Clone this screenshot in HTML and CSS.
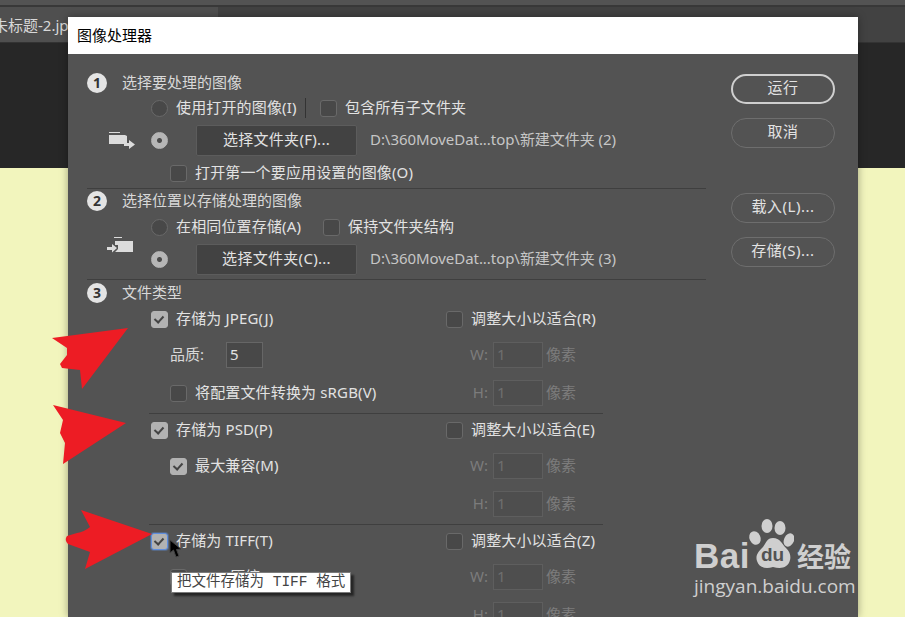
FILE: index.html
```html
<!DOCTYPE html>
<html lang="zh">
<head>
<meta charset="utf-8">
<title>图像处理器</title>
<link rel="stylesheet" href="styles.css">
</head>
<body>
<div class="app">
  <div class="menubar"></div>
  <div class="tabbar"><div class="tab"><span class="tab-text">未标题-2.jpg</span></div></div>
  <div class="canvas-dark"></div>
  <div class="canvas-doc"></div>
</div>

<div class="dialog">
  <div class="titlebar">图像处理器</div>
  <div class="dialog-body">
    <div class="main">
      <section class="section s1">
        <div class="step"><span class="badge">1</span><span class="step-text">选择要处理的图像</span></div>
        <div class="row"><span class="radio"></span><span class="lbl w-open">使用打开的图像(I)</span><span class="sep"></span><span class="box"></span><span class="lbl">包含所有子文件夹</span></div>
        <div class="row row-btn">
          <svg class="folder" width="26" height="18" viewBox="0 0 26 18"><path d="M0 0h11v1H0zM0 3h16l2 1v8H0z" fill="#dcdcdc"/><path d="M15 11h5V8l6 4.500-6 4.500v-3h-5z" fill="#dcdcdc"/></svg>
          <span class="radio on"></span><span class="pick">选择文件夹(F)...</span><span class="path">D:\360MoveDat...top\新建文件夹 (2)</span>
        </div>
        <div class="row row-sub"><span class="box"></span><span class="lbl">打开第一个要应用设置的图像(O)</span></div>
      </section>
      <section class="section s2">
        <div class="step"><span class="badge">2</span><span class="step-text">选择位置以存储处理的图像</span></div>
        <div class="row"><span class="radio"></span><span class="lbl w-same">在相同位置存储(A)</span><span class="box"></span><span class="lbl">保持文件夹结构</span></div>
        <div class="row row-btn">
          <svg class="folder folder-out" width="26" height="19" viewBox="0 0 26 19"><path d="M7 0h8v1H7zM8 4h18v11H8l3-3V8H8z" fill="#dcdcdc"/><path d="M0 10h5V7l5 4-5 4.500V13H0z" fill="#dcdcdc"/></svg>
          <span class="radio on"></span><span class="pick">选择文件夹(C)...</span><span class="path">D:\360MoveDat...top\新建文件夹 (3)</span>
        </div>
      </section>
      <section class="section s3">
        <div class="step"><span class="badge">3</span><span class="step-text">文件类型</span></div>

        <div class="format first">
          <div class="cell"><span class="box on"></span><span class="lbl">存储为 JPEG(J)</span></div>
          <div class="cell"><span class="box"></span><span class="lbl">调整大小以适合(R)</span></div>
          <div class="cell sub"><span class="quality">品质:</span><span class="field">5</span></div>
          <div class="cell off"><span class="dim">W:</span><span class="field">1</span><span class="unit">像素</span></div>
          <div class="cell sub"><span class="box"></span><span class="lbl">将配置文件转换为 sRGB(V)</span></div>
          <div class="cell off"><span class="dim">H:</span><span class="field">1</span><span class="unit">像素</span></div>
        </div>

        <div class="format">
          <div class="cell"><span class="box on"></span><span class="lbl">存储为 PSD(P)</span></div>
          <div class="cell"><span class="box"></span><span class="lbl">调整大小以适合(E)</span></div>
          <div class="cell sub"><span class="box on"></span><span class="lbl">最大兼容(M)</span></div>
          <div class="cell off"><span class="dim">W:</span><span class="field">1</span><span class="unit">像素</span></div>
          <div class="cell sub"></div>
          <div class="cell off"><span class="dim">H:</span><span class="field">1</span><span class="unit">像素</span></div>
        </div>

        <div class="format last">
          <div class="cell"><span class="box on focus"></span><span class="lbl">存储为 TIFF(T)</span></div>
          <div class="cell"><span class="box"></span><span class="lbl">调整大小以适合(Z)</span></div>
          <div class="cell sub"><span class="box"></span><span class="lbl">LZW 压缩(W)</span></div>
          <div class="cell off"><span class="dim">W:</span><span class="field">1</span><span class="unit">像素</span></div>
          <div class="cell sub"></div>
          <div class="cell off"><span class="dim">H:</span><span class="field">1</span><span class="unit">像素</span></div>
        </div>
      </section>
    </div>
    <div class="side">
      <div class="pill primary">运行</div>
      <div class="pill">取消</div>
      <div class="pill gap-big">载入(L)...</div>
      <div class="pill">存储(S)...</div>
    </div>
  </div>
</div>

<svg class="annot" width="905" height="617" viewBox="0 0 905 617">
  <path fill="#ed1c24" d="M128 328L52 338L67 348L67 355L60 364L62 368L80 370L82 389Z"/>
  <path fill="#ed1c24" d="M126 423L53 405L63 420L60 433L65 443L63 464Z"/>
  <path fill="#ed1c24" d="M152 534L81 510L90 527Q84 532 77 533L67 536Q64 540 68 544L90 552L85 569Z"/>
  <path fill="#000" stroke="#444" stroke-width="1" d="M170 540L170 553L173.500 550L176 557L179 556L176.500 549.500L181 549Z"/>
</svg>

<div class="tooltip">把文件存储为 TIFF 格式</div>

<div class="wm">
  <svg class="wm-paw" width="50" height="56" viewBox="0 0 50 56">
    <ellipse cx="23" cy="8" rx="5.500" ry="7" fill="#cfcfcf"/>
    <ellipse cx="36" cy="10" rx="5.500" ry="7" fill="#cfcfcf"/>
    <ellipse cx="11" cy="20" rx="5.500" ry="7" transform="rotate(-25 11 20)" fill="#cfcfcf"/>
    <ellipse cx="45" cy="22" rx="5" ry="7" transform="rotate(25 45 22)" fill="#cfcfcf"/>
    <path d="M29 20c7 0 9 6 13 10 4 4 5 8 4 12-2 8-9 9-17 7-7 2-14 1-16-6-2-6 2-10 6-14 3-4 4-9 10-9z" fill="#cfcfcf"/>
  </svg>
  <span class="wm-bai">Bai</span>
  <span class="wm-du">du</span>
  <span class="wm-cn">经验</span>
  <span class="wm-url">jingyan.baidu.com</span>
</div>
</body>
</html>
```
FILE: styles.css
```css
html, body {
  margin: 0;
  padding: 0;
  width: 905px;
  height: 617px;
  overflow: hidden;
}
body {
  position: relative;
  font-family: "Noto Sans", "Noto Sans CJK SC", sans-serif;
  font-size: 15px;
  line-height: 24px;
  color: #e2e2e2;
  background: #f2f5bd;
}
.app { display: flex; flex-direction: column; height: 617px; }
.menubar { height: 5px; background: #535353; border-bottom: 2px solid #383838; }
.tabbar { height: 35px; background: #424242; border-bottom: 1px solid #333; }
.tab { width: 218px; height: 35px; background: #4f4f4f; overflow: hidden; color: #d8d8d8; line-height: 36px; white-space: nowrap; }
.tab-text { display: block; margin-left: -7px; }
.canvas-dark { height: 125px; background: #272727; }
.canvas-doc { flex: 1; background: #f2f5bd; }

.dialog {
  position: absolute;
  left: 68px;
  top: 17px;
  width: 790px;
  height: 600px;
  background: #535353;
  overflow: hidden;
  box-shadow: 0 0 8px rgba(0, 0, 0, .35);
}
.titlebar {
  height: 37px;
  line-height: 36px;
  padding-left: 9px;
  background: #fff;
  color: #000;
}
.dialog-body { display: flex; padding-left: 19px; }
.main { width: 619px; }
.side { display: flex; flex-direction: column; gap: 14px; margin-left: 25px; padding-top: 20px; }

.section { border-bottom: 1px solid #3f3f3f; }
.section.s1 { padding-top: 17px; height: 117px; }
.section.s2 { height: 90px; }
.section.s3 { border-bottom: 0; }
.step { display: flex; align-items: center; height: 24px; color: #d8d8d8; }
.step-text { padding-bottom: 2px; }
.s3 .step { margin-top: 1px; }
.badge {
  width: 20px;
  height: 20px;
  margin-right: 15px;
  border-radius: 50%;
  background: #e4e4e4;
  color: #333;
  font-weight: 700;
  font-size: 14px;
  line-height: 20px;
  text-align: center;
}
.row { display: flex; align-items: center; height: 24px; padding-left: 64px; margin-top: 1px; }
.row-btn { height: 31px; margin-top: 5px; position: relative; }
.row-sub { margin-top: 5px; padding-left: 83px; }
.s2 .row { margin-top: 2px; }
.s2 .row-btn { margin-top: 5px; }
.folder { position: absolute; left: 22px; top: 7px; }
.folder-out { left: 20px; top: -7px; }

.radio, .box { flex: none; box-sizing: border-box; width: 17px; height: 17px; background: #484848; border: 1px solid #696969; }
.radio { border-radius: 50%; }
.radio.on { background: radial-gradient(circle, #4a4a4a 0 2px, #b6b6b6 3px); border-color: #b6b6b6; }
.box { border-radius: 3px; position: relative; }
.box.on { background: #b2b2b2; border-color: #b2b2b2; }
.box.on::after {
  content: "";
  position: absolute;
  left: 4px;
  top: 2px;
  width: 4px;
  height: 7px;
  border: solid #444;
  border-width: 0 2px 2px 0;
  transform: rotate(42deg);
}
.box.focus { border-color: #5f8ede; box-shadow: 0 0 0 1px rgba(95, 142, 222, .35); }
.lbl { margin-left: 8px; padding-bottom: 2px; letter-spacing: .15px; white-space: nowrap; }
.w-open { width: 129px; }
.w-same { width: 147px; }
.sep { width: 1px; height: 20px; background: #333; margin-right: 14px; }
.pick {
  box-sizing: border-box;
  width: 161px;
  height: 31px;
  margin-left: 28px;
  margin-right: 13px;
  line-height: 27px;
  letter-spacing: .3px;
  text-align: center;
  background: #424242;
  border: 1px solid #5c5c5c;
  border-radius: 2px;
}
.path { color: #c6c6c6; padding-bottom: 3px; letter-spacing: -.05px; white-space: nowrap; }

.format {
  display: grid;
  grid-template-columns: 297px 157px;
  grid-template-rows: 24px 26px 27px;
  row-gap: 11px;
  width: 454px;
  margin-left: 62px;
  padding: 4px 0 7px;
  border-bottom: 1px solid #3f3f3f;
}
.format > :nth-child(n+5) { padding-top: 1px; }
.format.first { padding-top: 2px; }
.format.last { border-bottom: 0; }
.cell { display: flex; align-items: center; padding-left: 2px; }
.format > .cell:nth-child(even) { padding-left: 0; }
.cell.sub { padding-left: 21px; }
.quality { width: 56px; padding-bottom: 2px; color: #d8d8d8; }
.field {
  box-sizing: border-box;
  width: 37px;
  height: 26px;
  padding-left: 3px;
  line-height: 22px;
  background: #484848;
  border: 1px solid #666;
}
.off { color: #7c7c7c; }
.off .dim { box-sizing: border-box; width: 43px; padding: 0 1px 2px 0; text-align: right; }
.off .field { width: 50px; margin-left: 4px; color: #6e6e6e; background: #4e4e4e; border-color: #5e5e5e; }
.off .unit { margin-left: 3px; padding-bottom: 2px; }

.pill {
  box-sizing: border-box;
  width: 104px;
  height: 30px;
  line-height: 24px;
  letter-spacing: .5px;
  text-align: center;
  border: 1px solid #6e6e6e;
  border-radius: 15px;
  white-space: nowrap;
}
.pill.primary { border: 2px solid #cfcfcf; line-height: 22px; }
.pill.gap-big { margin-top: 31px; }

.annot { position: absolute; left: 0; top: 0; pointer-events: none; }

.tooltip {
  position: absolute;
  left: 171px;
  top: 572px;
  box-sizing: border-box;
  width: 180px;
  height: 21px;
  padding-left: 5px;
  background: #fff;
  border: 1px solid #7a7a7a;
  box-shadow: 3px 3px 2px rgba(0, 0, 0, .55);
  color: #444;
  font-family: "Liberation Mono", "Noto Sans CJK SC", monospace;
  font-size: 14.500px;
  line-height: 19px;
  white-space: pre;
}

.wm { position: absolute; left: 690px; top: 518px; width: 170px; height: 82px; color: #cfcfcf; }
.wm-paw { position: absolute; left: 54px; top: 0; }
.wm-bai { position: absolute; left: 4px; top: 18px; font: 700 35px/40px "Liberation Sans", sans-serif; letter-spacing: .5px; }
.wm-du { position: absolute; left: 71px; top: 26px; font: 700 19px/22px "Liberation Sans", sans-serif; color: #535353; }
.wm-cn { position: absolute; left: 107px; top: 22px; font: 700 27px/32px "Noto Sans CJK SC", sans-serif; }
.wm-url { position: absolute; left: 4px; top: 55px; font: 400 19px/26px "Open Sans", sans-serif; white-space: nowrap; }
```
